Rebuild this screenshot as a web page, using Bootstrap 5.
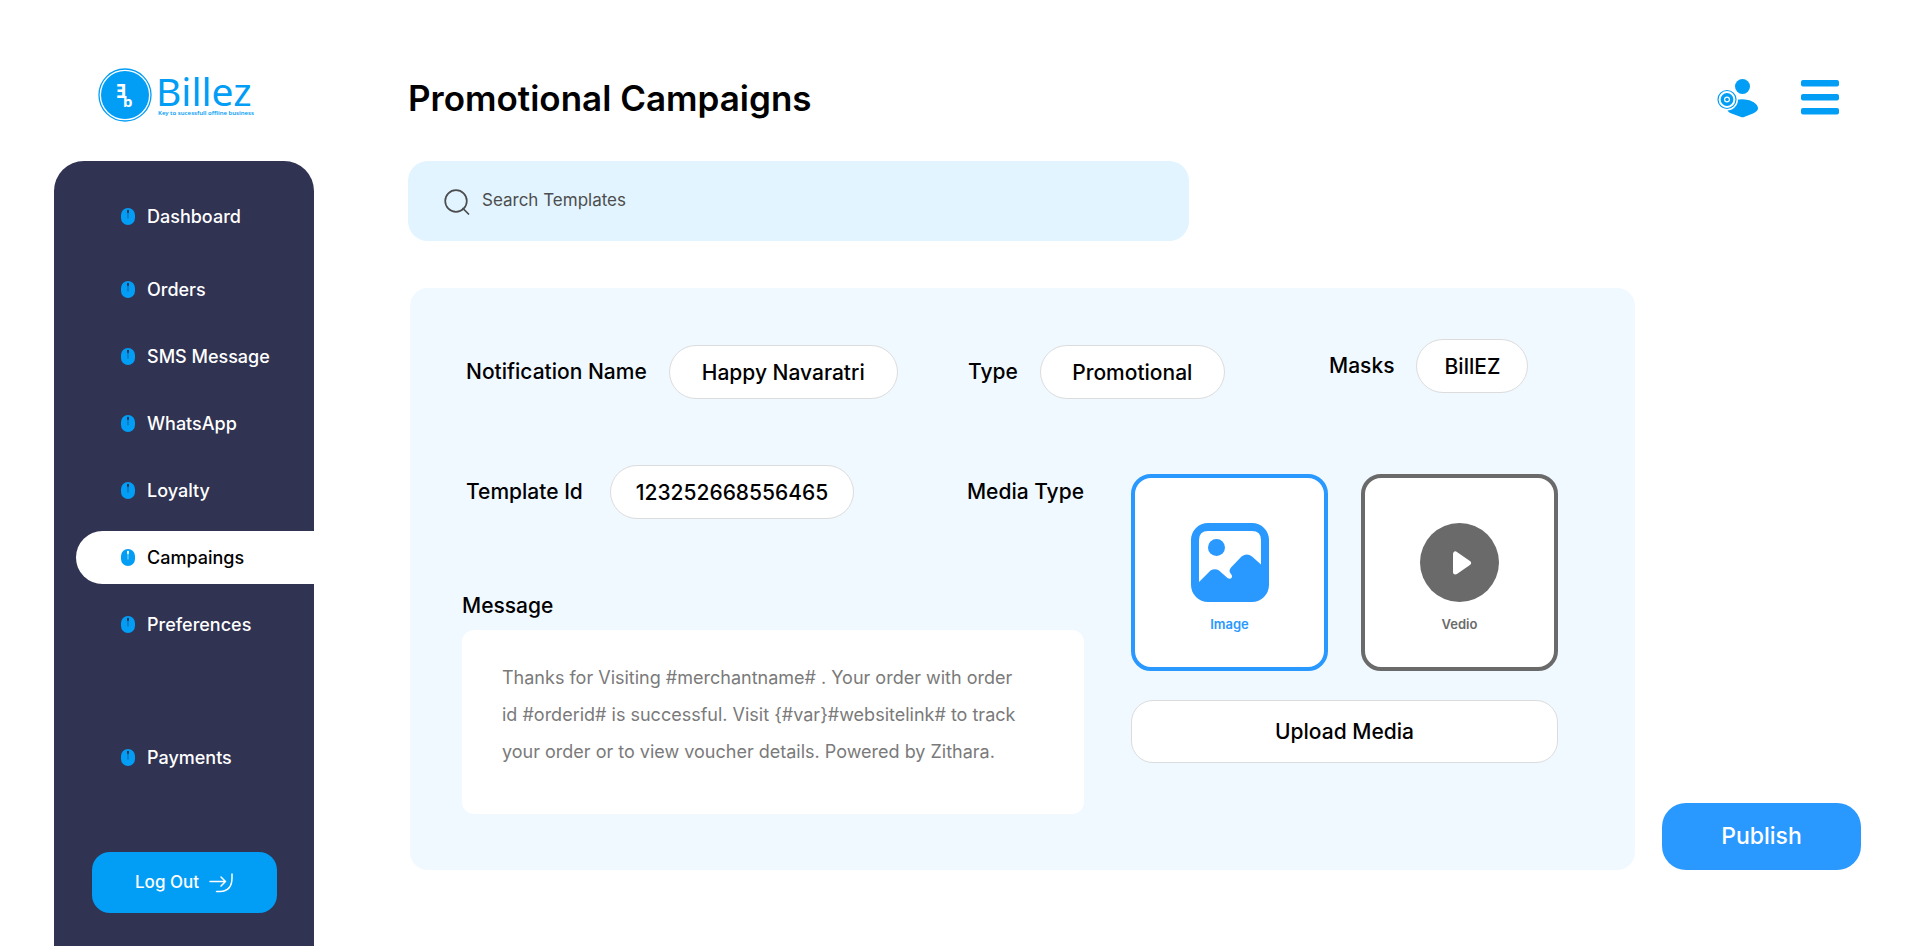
<!DOCTYPE html>
<html lang="en">
<head>
<meta charset="utf-8">
<meta name="viewport" content="width=device-width, initial-scale=1">
<title>Promotional Campaigns</title>
<link href="https://cdn.jsdelivr.net/npm/bootstrap@5.3.0/dist/css/bootstrap.min.css" rel="stylesheet">
<style>
  body { font-family: Inter, "Noto Sans", sans-serif; color: #000; background: #fff; }
  .app-shell { min-height: 100vh; padding-left: 54px; padding-right: 59px; gap: 94px; }
  .side-col { width: 260px; }
  .brand-box { height: 161px; padding: 56px 0 0 42px; }
  .side-menu { background: #303352; border-radius: 30px 30px 0 0; padding-top: 29px; }
  .menu-list { gap: 14px; padding-left: 22px; }
  .menu-link { height: 53px; gap: 12px; padding-left: 45px; font-size: 18px; font-weight: 500; color: #fff; border-radius: 27px 0 0 27px; text-decoration: none; }
  .menu-link.active { background: #fff; color: #000; }
  .after-first { margin-top: 6px; }
  .after-break { margin-top: 66px; }
  .logout-btn { width: 185px; height: 61px; margin: 68px auto 35px; gap: 10px; border-radius: 18px; background: #029df5; color: #fff; font-size: 17px; font-weight: 500; }
  .logout-btn:hover, .publish-btn:hover { background: #0b84e0; color: #fff; }
  .top-bar { height: 161px; padding-top: 78px; padding-right: 22px; }
  .top-actions { gap: 42px; }
  .page-title { font-size: 35px; font-weight: 600; line-height: 40px; }
  .search-box { max-width: 781px; height: 80px; border-radius: 20px; background: #e1f4ff; padding-left: 36px; gap: 12px; }
  .search-box input { font-size: 17px; color: #4d4d4d; }
  .search-box input::placeholder { color: #4d4d4d; opacity: 1; }
  .work-row { margin-top: 47px; gap: 27px; padding-left: 2px; }
  .form-panel { background: #f0f9ff; border-radius: 18px; padding: 51px 77px 56px 52px; }
  .field-grid { display: grid; grid-template-columns: 506fr 361fr 229fr; align-items: center; margin-bottom: 60px; }
  .field-pair { gap: 22px; }
  .inset { padding-left: 4px; }
  .field-name { font-size: 21px; font-weight: 500; line-height: 32px; white-space: nowrap; }
  .id-name { min-width: 122px; }
  .pill-input { height: 54px; border: 1px solid #dcdcdc; border-radius: 27px; background: #fff; font-size: 21px; font-weight: 500; text-align: center; color: #000; min-width: 0; }
  .w-name { width: 229px; } .w-type { width: 185px; } .w-mask { width: 112px; } .w-id { width: 244px; }
  .raised { padding-bottom: 12px; }
  .lower-row { gap: 47px; }
  .message-label { margin-top: 71px; margin-bottom: 8px; }
  .message-box { height: 184px; border: 0; border-radius: 12px; background: #fff; padding: 29px 58px 29px 40px; font-size: 18px; line-height: 37px; color: #7a7a7a; resize: none; overflow: hidden; }
  .media-col { width: 427px; padding-top: 9px; }
  .media-cards { gap: 33px; }
  .media-card { height: 197px; padding-top: 45px; border: 4px solid #6a6a6a; border-radius: 20px; background: #fff; color: #6a6a6a; font-size: 13px; font-weight: 600; line-height: 20px; gap: 12px; cursor: pointer; }
  .media-card.chosen { border-color: #2998ff; color: #2998ff; }
  .upload-btn { height: 63px; margin-top: 29px; border: 1px solid #dcdcdc; border-radius: 22px; background: #fff; font-size: 21px; font-weight: 500; color: #000; }
  .publish-btn { width: 199px; height: 67px; border-radius: 24px; background: #2998ff; color: #fff; font-size: 23px; font-weight: 500; }
</style>
</head>
<body>
<svg class="d-none" aria-hidden="true">
  <symbol id="mouse" viewBox="0 0 14 17">
    <path fill="#029df5" fill-rule="evenodd" d="M7 0a7 7 0 0 1 7 7v3a7 7 0 0 1-14 0V7a7 7 0 0 1 7-7zM6 2v2.300q.1.700.7.900V10.500h.6V5.200q.6-.2.7-.9V2q-1-.5-2 0z"/>
  </symbol>
</svg>
<div class="app-shell d-flex">
  <aside class="side-col flex-shrink-0 d-flex flex-column">
    <a class="brand-box d-block" href="#" aria-label="Billez">
      <svg class="d-block" width="170" height="70" viewBox="96 56 170 70" fill="#029df5">
        <circle cx="125" cy="95" r="26" fill="none" stroke="#029df5" stroke-width="1.300"/>
        <circle cx="125" cy="95" r="24"/>
        <g fill="#fff" font-family="Noto Sans" font-weight="700"><text x="116" y="98" font-size="19">Ǝ</text><text x="123" y="107" font-size="15">b</text></g>
        <text x="156" y="106" font-family="Noto Sans" font-size="39">Billez</text>
        <text x="158" y="115" font-family="Noto Sans" font-weight="600" font-size="6">Key to sucessfull offline business</text>
      </svg>
    </a>
    <div class="side-menu flex-grow-1 d-flex flex-column">
      <nav class="menu-list d-flex flex-column">
        <a class="menu-link d-flex align-items-center" href="#"><svg width="14" height="17"><use href="#mouse"/></svg>Dashboard</a>
        <a class="menu-link after-first d-flex align-items-center" href="#"><svg width="14" height="17"><use href="#mouse"/></svg>Orders</a>
        <a class="menu-link d-flex align-items-center" href="#"><svg width="14" height="17"><use href="#mouse"/></svg>SMS Message</a>
        <a class="menu-link d-flex align-items-center" href="#"><svg width="14" height="17"><use href="#mouse"/></svg>WhatsApp</a>
        <a class="menu-link d-flex align-items-center" href="#"><svg width="14" height="17"><use href="#mouse"/></svg>Loyalty</a>
        <a class="menu-link active d-flex align-items-center" href="#" aria-current="page"><svg width="14" height="17"><use href="#mouse"/></svg>Campaings</a>
        <a class="menu-link d-flex align-items-center" href="#"><svg width="14" height="17"><use href="#mouse"/></svg>Preferences</a>
        <a class="menu-link after-break d-flex align-items-center" href="#"><svg width="14" height="17"><use href="#mouse"/></svg>Payments</a>
      </nav>
      <button type="button" class="logout-btn btn d-flex align-items-center justify-content-center">Log Out
        <svg width="24" height="20" viewBox="0 0 24 20" fill="none" stroke="#fff" stroke-width="1.500" stroke-linecap="round" stroke-linejoin="round"><path d="M1 8.500h15.500M12 4l4.500 4.500L12 13M23 1v4q0 13-12 13.500H7.500"/></svg>
      </button>
    </div>
  </aside>

  <main class="flex-grow-1">
    <header class="top-bar d-flex align-items-start justify-content-between">
      <h1 class="page-title mb-0">Promotional Campaigns</h1>
      <div class="top-actions d-flex">
        <button type="button" class="btn p-0 border-0" aria-label="Account">
          <svg class="d-block" width="42" height="40" viewBox="1717 79 42 40" fill="#029df5">
            <circle cx="1742.500" cy="87.500" r="7.500"/>
            <path d="M1736 101q6-1.500 12 0c6 1.300 10 5 10 8.300q0 3-5 5.200l-9 3.500q-1.500.6-3 0l-9.500-3.500q-4-1.500-4-4z"/>
            <circle cx="1727" cy="100.500" r="11" fill="#fff"/>
            <circle cx="1727" cy="100.500" r="9" fill="none" stroke="#029df5" stroke-width="1.200"/>
            <circle cx="1727" cy="100.500" r="4.700" fill="none" stroke="#029df5" stroke-width="3.400"/>
            <circle cx="1727" cy="100.500" r="1.800"/>
          </svg>
        </button>
        <button type="button" class="btn p-0 border-0" aria-label="Menu">
          <svg class="d-block" width="38" height="40" viewBox="0 0 38 40" fill="#029df5"><rect y="2" width="38" height="6.500" rx="2"/><rect y="16" width="38" height="6.500" rx="2"/><rect y="30" width="38" height="6.500" rx="2"/></svg>
        </button>
      </div>
    </header>

    <label class="search-box d-flex align-items-center">
      <svg class="flex-shrink-0" width="26" height="27" viewBox="0 0 26 27" fill="none" stroke="#4d4d4d" stroke-width="1.700" stroke-linecap="round"><circle cx="12" cy="13" r="10.800"/><path d="M19 20.500l5.500 5.500"/></svg>
      <input type="text" class="form-control border-0 bg-transparent shadow-none p-0" placeholder="Search Templates" aria-label="Search Templates">
    </label>

    <form class="work-row d-flex align-items-end">
      <section class="form-panel flex-grow-1">
        <div class="field-grid">
          <div class="field-pair inset d-flex align-items-center"><label class="field-name" for="nname">Notification Name</label><input class="pill-input w-name" id="nname" type="text" value="Happy Navaratri"></div>
          <div class="field-pair d-flex align-items-center"><label class="field-name" for="ntype">Type</label><input class="pill-input w-type" id="ntype" type="text" value="Promotional"></div>
          <div class="field-pair raised d-flex align-items-center"><label class="field-name" for="nmask">Masks</label><input class="pill-input w-mask" id="nmask" type="text" value="BillEZ"></div>
        </div>
        <div class="lower-row d-flex">
          <div class="flex-grow-1">
            <div class="d-flex align-items-center justify-content-between">
              <div class="field-pair inset d-flex align-items-center"><label class="field-name id-name" for="tid">Template Id</label><input class="pill-input w-id" id="tid" type="text" value="123252668556465"></div>
              <span class="field-name" id="mtype">Media Type</span>
            </div>
            <label class="field-name message-label d-block" for="msg">Message</label>
            <textarea class="message-box d-block w-100" id="msg">Thanks for Visiting #merchantname# . Your order with order id #orderid# is successful. Visit {#var}#websitelink# to track your order or to view voucher details. Powered by Zithara.</textarea>
          </div>
          <div class="media-col flex-shrink-0">
            <div class="media-cards d-flex" role="group" aria-labelledby="mtype">
              <button type="button" class="media-card chosen w-50 d-flex flex-column align-items-center" aria-pressed="true">
                <svg width="78" height="79" viewBox="0 0 78 79"><rect width="78" height="79" rx="17" fill="#2998ff"/><path fill="#fff" d="M8 59V17q0-9 9-9h44q9 0 9 9v24.500l-9-8q-5-4-10.500 0l-10.500 11q-3 3.500 0 6.500 2 2 .5 4-1.500 1.500-4 0L28 47.500q-4-2.500-8.500 0z"/><circle cx="25.500" cy="24.500" r="8.500" fill="#2998ff"/></svg>
                Image
              </button>
              <button type="button" class="media-card w-50 d-flex flex-column align-items-center" aria-pressed="false">
                <svg width="79" height="79" viewBox="0 0 79 79"><circle cx="39.500" cy="39.500" r="39.500" fill="#6a6a6a"/><path d="M35.500 31v18l13-9z" fill="#fff" stroke="#fff" stroke-width="5" stroke-linejoin="round"/></svg>
                Vedio
              </button>
            </div>
            <button type="button" class="upload-btn w-100">Upload Media</button>
          </div>
        </div>
      </section>
      <button type="submit" class="publish-btn btn flex-shrink-0">Publish</button>
    </form>
  </main>
</div>
<script src="https://cdn.jsdelivr.net/npm/bootstrap@5.3.0/dist/js/bootstrap.bundle.min.js"></script>
</body>
</html>
